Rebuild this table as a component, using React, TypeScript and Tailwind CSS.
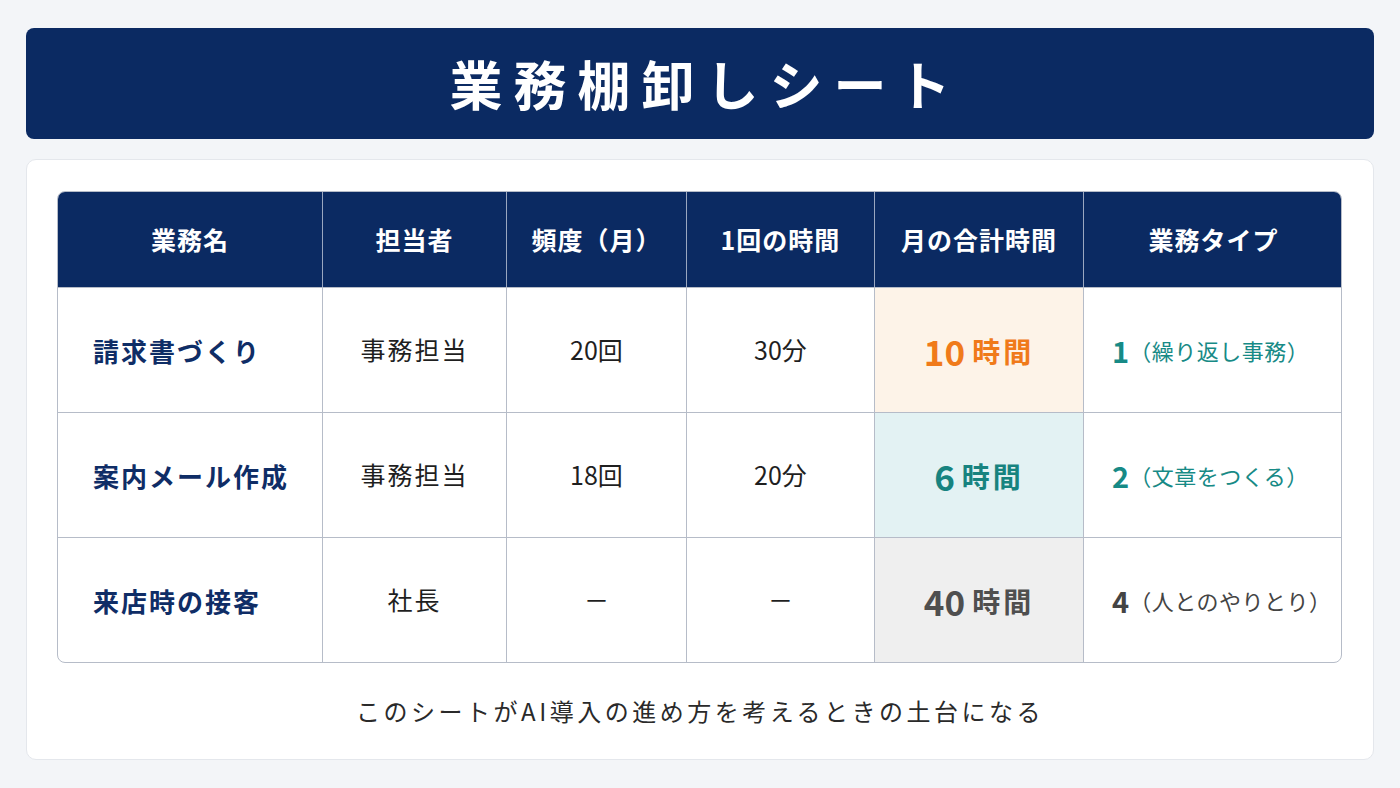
import React from 'react';

/**
 * 業務棚卸しシート — 業務ごとの月の合計時間とタイプ一覧
 */

const FONT = { fontFamily: '"Noto Sans CJK JP", "Noto Sans", sans-serif' };

const COLS = 'grid-cols-[264px_184px_180px_188px_209px_260px]';

const HEADERS = ['業務名', '担当者', '頻度（月）', '1回の時間', '月の合計時間', '業務タイプ'];

type Tone = 'orange' | 'teal' | 'gray';

const TONE = {
  orange: { cell: 'bg-[#fdf3e8]', text: 'text-[#f07a1a]', type: 'text-[#178a86]' },
  teal:   { cell: 'bg-[#e3f2f3]', text: 'text-[#17837f]', type: 'text-[#178a86]' },
  gray:   { cell: 'bg-[#efefef]', text: 'text-[#4f4f4f]', type: 'text-[#444444]' },
} as const;

const ROWS: {
  name: string;
  owner: string;
  freq: string;
  once: string;
  hours: string;
  typeNo: string;
  typeLabel: string;
  tone: Tone;
}[] = [
  { name: '請求書づくり', owner: '事務担当', freq: '20回', once: '30分', hours: '10', typeNo: '1', typeLabel: '（繰り返し事務）', tone: 'orange' },
  { name: '案内メール作成', owner: '事務担当', freq: '18回', once: '20分', hours: '6', typeNo: '2', typeLabel: '（文章をつくる）', tone: 'teal' },
  { name: '来店時の接客', owner: '社長', freq: '－', once: '－', hours: '40', typeNo: '4', typeLabel: '（人とのやりとり）', tone: 'gray' },
];

export default function App() {
  return (
    <div className="w-[1400px] h-[788px] bg-[#f3f5f8] pt-[28px] px-[26px]" style={FONT}>
      {/* タイトル */}
      <header className="h-[111px] rounded-[8px] bg-[#0b2a62] flex items-center justify-center">
        <h1 className="text-white font-bold text-[53px] tracking-[11px] leading-none pl-[11px]">業務棚卸しシート</h1>
      </header>

      {/* 本体 */}
      <section className="mt-[20px] h-[601px] bg-white rounded-[10px] border border-[#e4e7ec] pt-[31px] pl-[30px]">
        <div className="w-[1285px] rounded-[8px] border border-[#b6bcc8] overflow-hidden">
          {/* 見出し行 */}
          <div className={`grid ${COLS} h-[95px] bg-[#0b2a62]`}>
            {HEADERS.map((h, i) => (
              <div
                key={h}
                className={`flex items-center justify-center text-white font-bold text-[25px] tracking-[1px] ${i > 0 ? 'border-l border-[#9aa7c0]' : ''}`}
              >
                {h}
              </div>
            ))}
          </div>

          {ROWS.map((r) => {
            const t = TONE[r.tone];
            return (
              <div key={r.name} className={`grid ${COLS} border-t border-[#b6bcc8] h-[125px]`}>
                <div className="flex items-center pl-[35px] text-[#0f2d66] font-bold text-[26px] tracking-[2px]">
                  {r.name}
                </div>
                <div className="flex items-center justify-center border-l border-[#b6bcc8] text-[#1f1f1f] text-[25px] tracking-[2px]">
                  {r.owner}
                </div>
                <div className="flex items-center justify-center border-l border-[#b6bcc8] text-[#1f1f1f] text-[25px]">
                  {r.freq}
                </div>
                <div className="flex items-center justify-center border-l border-[#b6bcc8] text-[#1f1f1f] text-[25px]">
                  {r.once}
                </div>
                <div className={`flex items-center justify-center border-l border-[#b6bcc8] font-bold ${t.cell} ${t.text}`}>
                  <span className="text-[35px] leading-none mr-[7px]">{r.hours}</span>
                  <span className="text-[28px] leading-none tracking-[3px] mt-[2px]">時間</span>
                </div>
                <div className={`flex items-center pl-[28px] border-l border-[#b6bcc8] ${t.type}`}>
                  <span className="text-[29px] font-bold leading-none">{r.typeNo}</span>
                  <span className="text-[22px] leading-none tracking-[0.5px]">{r.typeLabel}</span>
                </div>
              </div>
            );
          })}
        </div>

        <p className="mt-[30px] text-center text-[24px] tracking-[3.5px] text-[#2a2a2a] pr-[30px]">
          このシートがAI導入の進め方を考えるときの土台になる
        </p>
      </section>
    </div>
  );
}
